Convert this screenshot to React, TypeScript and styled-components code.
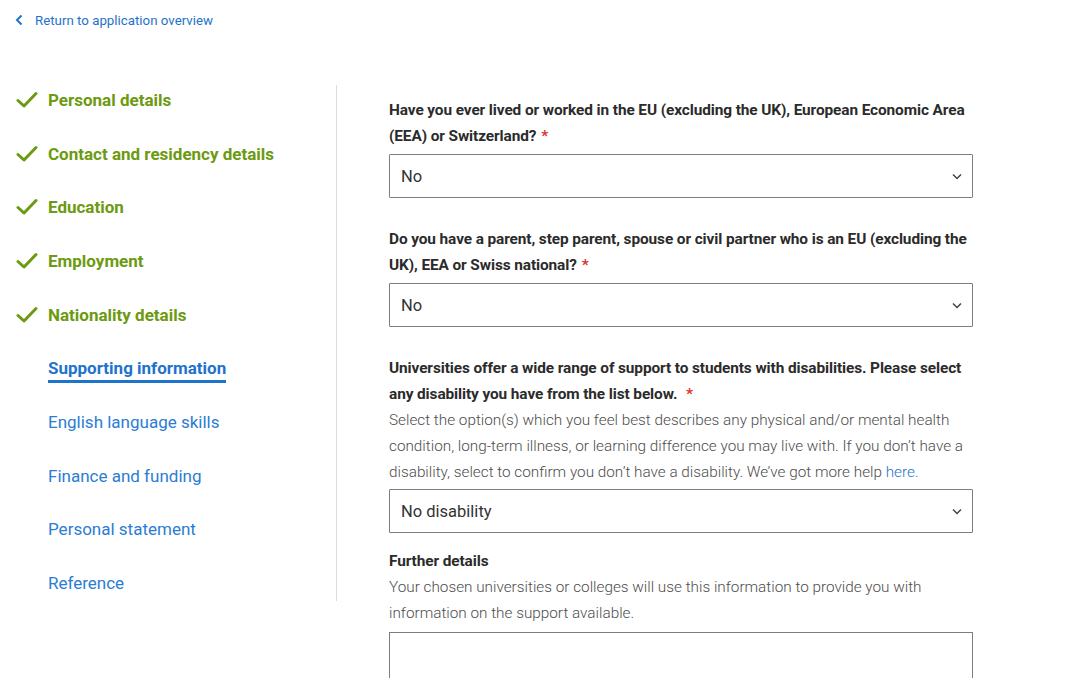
import { createGlobalStyle } from 'styled-components'
import styled from 'styled-components'

const GlobalStyle = createGlobalStyle`
  body {
    margin: 0;
    background: #fff;
    font-family: Roboto, "Liberation Sans", Arial, sans-serif;
    color: #333;
  }
`

const Page = styled.div`
  width: 1080px;
  height: 678px;
  overflow: hidden;
`

const BackLink = styled.a`
  display: flex;
  align-items: center;
  gap: 12px;
  padding: 11px 0 0 15px;
  height: 18px;
  color: #1e73cc;
  font-size: 13.3px;
  text-decoration: none;
`

const Layout = styled.div`
  display: grid;
  grid-template-columns: 336px 1px 1fr;
  margin-top: 44px;
  align-items: start;
`

const Sidebar = styled.nav`
  display: flex;
  flex-direction: column;
`

const Divider = styled.div`
  margin-top: 12px;
  height: 516px;
  background: #dcdcdc;
`

const NavItem = styled.div<{ $done?: boolean }>`
  display: flex;
  align-items: center;
  gap: 9px;
  height: 53.7px;
  flex-shrink: 0;
  padding-left: 15px;
  font-size: 17px;
  font-weight: ${(p) => (p.$done ? 700 : 400)};
  color: ${(p) => (p.$done ? '#6c9a10' : '#2a7dd4')};
`

const NavLabel = styled.span<{ $active?: boolean }>`
  padding-bottom: ${(p) => (p.$active ? '2px' : '0')};
  border-bottom: ${(p) => (p.$active ? '3px solid #1e73cc' : 'none')};
  color: ${(p) => (p.$active ? '#1e73cc' : 'inherit')};
  font-weight: ${(p) => (p.$active ? 700 : 'inherit')};
  margin-top: ${(p) => (p.$active ? '5px' : '0')};
`

const IconSlot = styled.span`
  display: inline-flex;
  width: 24px;
  justify-content: center;
`

const Content = styled.main`
  padding: 24px 0 0 52px;
  width: 584px;
`

const Field = styled.div<{ $tight?: boolean }>`
  margin-bottom: ${(p) => (p.$tight ? '15px' : '28px')};
`

const Label = styled.div`
  font-size: 15.4px;
  font-weight: 700;
  line-height: 26px;
  color: #2b2b2b;
  letter-spacing: -0.1px;
`

const Required = styled.span`
  color: #e2322c;
  margin-left: 5px;
`

const Help = styled.div`
  font-size: 15.3px;
  line-height: 26px;
  color: #4d4d4d;
  font-weight: 300;
`

const HelpLink = styled.a`
  color: #1e73cc;
  text-decoration: none;
`

const Select = styled.div<{ $gap?: number }>`
  display: flex;
  align-items: center;
  justify-content: space-between;
  height: 44px;
  box-sizing: border-box;
  border: 1px solid #7d7d7d;
  border-radius: 1px;
  margin-top: ${(p) => p.$gap ?? 5}px;
  padding: 0 10px 0 11px;
  font-size: 16.5px;
  color: #333;
`

const TextArea = styled.div`
  height: 60px;
  border: 1px solid #7d7d7d;
  border-bottom: none;
  margin-top: 6px;
`

const Check = () => (
  <svg width="22" height="18" viewBox="0 0 22 18">
    <path d="M2 9.5 L8 15 L20 2.5" fill="none" stroke="#6c9a10" strokeWidth="3" strokeLinecap="round" strokeLinejoin="round" />
  </svg>
)

const Chevron = () => (
  <svg width="10" height="7" viewBox="0 0 10 7">
    <path d="M1 1.5 L5 5.5 L9 1.5" fill="none" stroke="#444" strokeWidth="1.5" />
  </svg>
)

const BackChevron = () => (
  <svg width="8" height="12" viewBox="0 0 8 12">
    <path d="M6.5 1.5 L2 6 L6.5 10.5" fill="none" stroke="#1e73cc" strokeWidth="2" />
  </svg>
)

const done = ['Personal details', 'Contact and residency details', 'Education', 'Employment', 'Nationality details']
const todo = ['English language skills', 'Finance and funding', 'Personal statement', 'Reference']

export default function App() {
  return (
    <Page>
      <GlobalStyle />
      <BackLink href="#">
        <BackChevron />
        Return to application overview
      </BackLink>
      <Layout>
        <Sidebar>
          {done.map((d) => (
            <NavItem key={d} $done>
              <IconSlot>
                <Check />
              </IconSlot>
              <NavLabel>{d}</NavLabel>
            </NavItem>
          ))}
          <NavItem>
            <IconSlot />
            <NavLabel $active>Supporting information</NavLabel>
          </NavItem>
          {todo.map((d) => (
            <NavItem key={d}>
              <IconSlot />
              <NavLabel>{d}</NavLabel>
            </NavItem>
          ))}
        </Sidebar>
        <Divider />
        <Content>
          <Field>
            <Label>
              Have you ever lived or worked in the EU (excluding the UK), European Economic Area (EEA) or
              Switzerland?<Required>*</Required>
            </Label>
            <Select>
              No
              <Chevron />
            </Select>
          </Field>
          <Field>
            <Label>
              Do you have a parent, step parent, spouse or civil partner who is an EU (excluding the UK), EEA or
              Swiss national?<Required>*</Required>
            </Label>
            <Select>
              No
              <Chevron />
            </Select>
          </Field>
          <Field $tight>
            <Label>
              Universities offer a wide range of support to students with disabilities. Please select any
              disability you have from the list below. <Required>*</Required>
            </Label>
            <Help>
              Select the option(s) which you feel best describes any physical and/or mental health condition,
              long-term illness, or learning difference you may live with. If you don’t have a disability, select
              to confirm you don’t have a disability. We’ve got more help <HelpLink href="#">here.</HelpLink>
            </Help>
            <Select $gap={4}>
              No disability
              <Chevron />
            </Select>
          </Field>
          <Field>
            <Label>Further details</Label>
            <Help>
              Your chosen universities or colleges will use this information to provide you with information on
              the support available.
            </Help>
            <TextArea />
          </Field>
        </Content>
      </Layout>
    </Page>
  )
}
